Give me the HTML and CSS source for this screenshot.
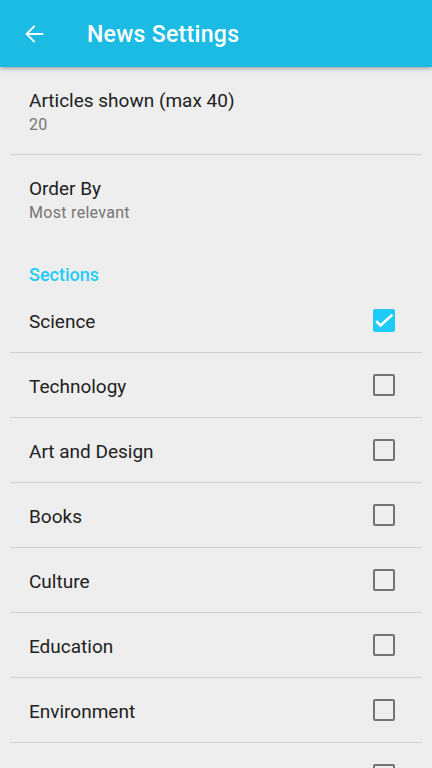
FILE: index.html
```html
<!DOCTYPE html>
<html>
<head>
<meta charset="utf-8">
<link rel="stylesheet" href="styles.css">
</head>
<body>
<header class="appbar">
  <svg class="back" viewBox="0 0 24 24" width="28" height="28"><path fill="#fff" d="M20 11.1H7.6l5.5-5.5L12 4.5 4.5 12l7.5 7.5 1.1-1.1-5.5-5.5H20v-1.8z"/></svg>
  <h1 class="title">News Settings</h1>
</header>
<main class="list">
  <div class="pref divided">
    <div class="pref-title">Articles shown (max 40)</div>
    <div class="pref-sub">20</div>
  </div>
  <div class="pref">
    <div class="pref-title">Order By</div>
    <div class="pref-sub">Most relevant</div>
  </div>
  <div class="cat">Sections</div>
  <div class="row"><span class="row-label">Science</span><span class="box checked"><svg viewBox="0 0 22 22" width="22" height="22"><path fill="none" stroke="#fff" stroke-width="2.6" stroke-linecap="square" d="M4 13l3.5 3.5L18.5 6.5"/></svg></span></div>
  <div class="row"><span class="row-label">Technology</span><span class="box"></span></div>
  <div class="row"><span class="row-label">Art and Design</span><span class="box"></span></div>
  <div class="row"><span class="row-label">Books</span><span class="box"></span></div>
  <div class="row"><span class="row-label">Culture</span><span class="box"></span></div>
  <div class="row"><span class="row-label">Education</span><span class="box"></span></div>
  <div class="row"><span class="row-label">Environment</span><span class="box"></span></div>
  <div class="row"><span class="row-label"></span><span class="box"></span></div>
</main>
</body>
</html>
```
FILE: styles.css
```css
html, body {
  margin: 0;
  padding: 0;
  background: #eeeeee;
  font-family: Roboto, "Noto Sans", sans-serif;
  height: 768px;
  overflow: hidden;
}
.appbar {
  position: relative;
  z-index: 2;
  height: 67px;
  background: #1bbbe3;
  display: flex;
  align-items: center;
  padding-left: 20px;
  box-shadow: 0 2px 4px rgba(0,0,0,0.28);
}
.back {
  display: block;
}
.title {
  margin: 2px 0 0 39px;
  color: #fff;
  font-size: 23px;
  font-weight: 500;
  letter-spacing: 0.3px;
}
.list {
  margin: 0 10px;
}
.pref {
  padding: 22px 0 19px 19px;
}
.divided {
  border-bottom: 1px solid #cfcfcf;
}
.pref-title {
  font-size: 19px;
  line-height: 24px;
  color: #212121;
}
.pref-sub {
  font-size: 16px;
  line-height: 20px;
  margin-top: 2px;
  color: #757575;
  letter-spacing: 0.3px;
}
.cat {
  padding: 23px 0 3px 19px;
  font-size: 18px;
  line-height: 20px;
  font-weight: 500;
  color: #1ecbf6;
}
.row {
  height: 64px;
  border-bottom: 1px solid #cfcfcf;
  display: flex;
  align-items: center;
  justify-content: space-between;
  padding: 0 27px 0 19px;
}
.row-label {
  font-size: 19px;
  color: #212121;
  padding-top: 2px;
}
.box {
  box-sizing: border-box;
  width: 22px;
  height: 22px;
  border: 2px solid #737373;
  border-radius: 2px;
}
.box.checked {
  background: #1ecbf6;
  border: none;
  height: 23px;
}
.box svg {
  display: block;
}
```
